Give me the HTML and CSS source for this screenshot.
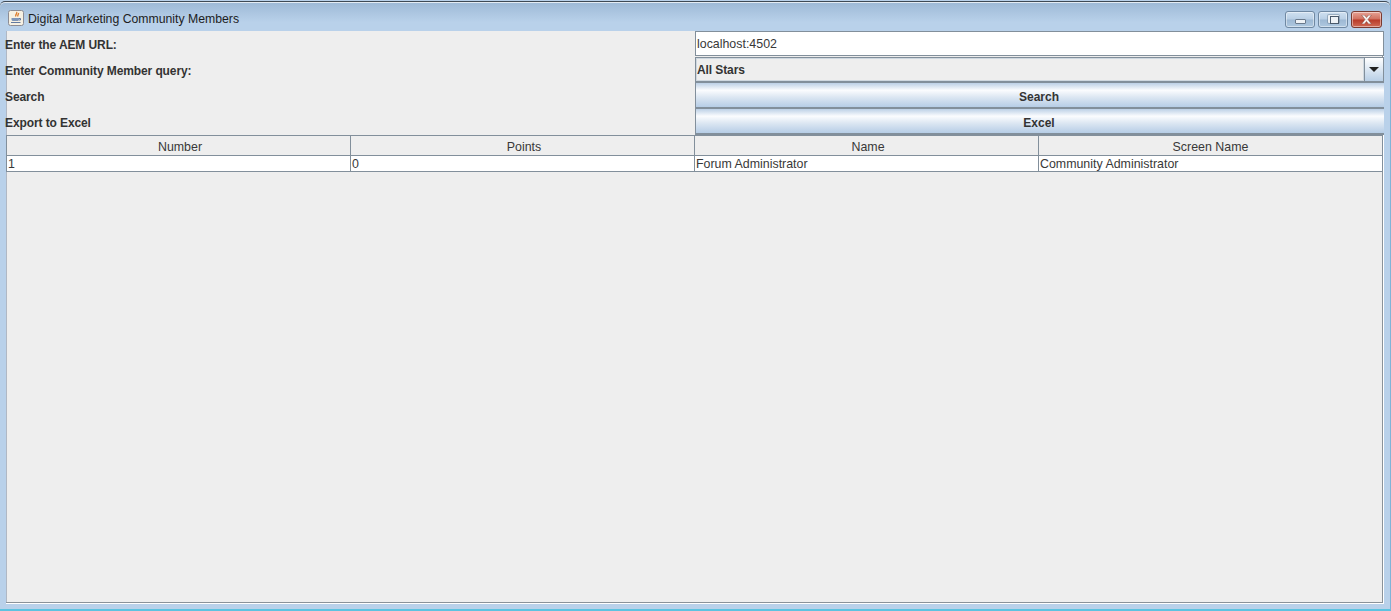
FILE: index.html
```html
<!DOCTYPE html>
<html lang="en">
<head>
<meta charset="utf-8">
<title>Digital Marketing Community Members</title>
<link rel="stylesheet" href="styles.css">
</head>
<body>
<div class="window">
  <header class="titlebar">
    <svg class="app-icon" width="16" height="16" viewBox="0 0 16 16">
      <rect x="0.5" y="0.5" width="15" height="15" rx="2" fill="#f6f0e2" stroke="#8c8c94"/>
      <path d="M8.500 2c1.500 1.500-2 2.500-.5 4.500M10.500 3c.5 1.200-1.500 1.800-.5 3.500" fill="none" stroke="#dc7a2a" stroke-width="1.300"/>
      <path d="M3.500 8h7.500v1.500c0 1-1 1.500-2 1.500H5.500c-1 0-2-.5-2-1.500z" fill="#7f96b8"/>
      <path d="M11 8.500h1.500v1.500H11M3 12.500h9.500" fill="none" stroke="#62799f"/>
    </svg>
    <span class="title">Digital Marketing Community Members</span>
    <div class="controls">
      <span class="ctl"><i class="glyph-min"></i></span>
      <span class="ctl"><i class="glyph-max"></i></span>
      <span class="ctl close"><svg width="13" height="9" viewBox="0 0 13 9"><path d="M1.500 0h3L6.500 2.500 8.500 0h3L8 4.500 11.500 9h-3L6.500 6.500 4.500 9h-3L5 4.500z" fill="#f4f0ee" stroke="#7a3a30" stroke-width=".5"/></svg></span>
    </div>
  </header>
  <main class="pane">
    <section class="form">
      <label class="lbl">Enter the AEM URL:</label>
      <div class="input">localhost:4502</div>
      <label class="lbl">Enter Community Member query:</label>
      <div class="combo"><span class="combo-value">All Stars</span><span class="combo-arrow"><i></i></span></div>
      <label class="lbl">Search</label>
      <button class="btn">Search</button>
      <label class="lbl">Export to Excel</label>
      <button class="btn">Excel</button>
    </section>
    <div class="table">
      <div class="th">Number</div><div class="th">Points</div><div class="th">Name</div><div class="th th-last">Screen Name</div>
      <div class="td">1</div><div class="td">0</div><div class="td">Forum Administrator</div><div class="td">Community Administrator</div>
    </div>
    <div class="filler"></div>
  </main>
</div>
</body>
</html>
```
FILE: styles.css
```css
* { box-sizing: border-box; }
html, body { margin: 0; height: 100%; overflow: hidden; background: #fff; }
body { font-family: "Liberation Sans", Arial, sans-serif; color: #383838; }

.window {
  height: 611px;
  display: flex;
  flex-direction: column;
  padding-top: 1px;
  background: #b9d1ea;
  border-bottom: 2px solid #5cc3e0;
  border-right: 1px solid #7fb4d8;
}
.titlebar {
  height: 30px;
  display: flex;
  align-items: center;
  padding: 4px 8px 0 8px;
  border-top: 1px solid #3f4a55;
  border-radius: 5px 5px 0 0;
  background: linear-gradient(#9db9d6, #b9d1ea 70%);
  box-shadow: inset 0 1px 0 #e4ecf4;
}
.app-icon { flex: none; margin-top: -1px; }
.title {
  margin-left: 4px;
  margin-top: 1px;
  font: 12.25px "Liberation Sans", sans-serif;
  color: #1d1d1d;
}
.controls { margin-left: auto; margin-top: 1px; display: flex; gap: 3px; }
.ctl {
  width: 30px;
  height: 17px;
  display: flex;
  align-items: center;
  justify-content: center;
  border: 1px solid #6f88a2;
  border-radius: 3px;
  background: linear-gradient(#cfe0f0 0, #b9cfe5 48%, #9db8d3 52%, #aec8e0 100%);
  box-shadow: inset 0 0 0 1px rgba(255,255,255,.45);
}
.ctl.close {
  width: 31px;
  border-color: #7a3a30;
  background: linear-gradient(#e7a295 0, #d0705f 48%, #b83a28 52%, #cf6a55 100%);
}
.glyph-min { width: 11px; height: 5px; margin-top: 5px; background: #eef2f6; border: 1px solid #6a7a8c; border-radius: 1px; }
.glyph-max { width: 11px; height: 8px; padding: 1px 2px; background: #eef2f6; border-radius: 1px; box-shadow: 0 0 0 1px rgba(110,130,150,.5); }
.glyph-max::after { content: ""; display: block; width: 7px; height: 6px; background: #eef2f6; border: 1px solid #4a5a6c; }

.pane {
  flex: 1;
  display: flex;
  flex-direction: column;
  margin: 0 6px 5px 6px;
  background: #eeeeee;
  border-bottom: 1px solid #fff;
  border-right: 1px solid #fff;
  box-shadow: inset -1px -1px 0 #8a9299, inset 1px 0 0 #b0b8c4;
}
.form {
  display: grid;
  grid-template-columns: 689px 689px;
  grid-template-rows: 26px 26px 26px 26px;
}
.lbl { font-size: 12px; letter-spacing: -.1px; font-weight: 700; line-height: 26px; padding-top: 1px; margin-left: -1px; color: #333; }
.input {
  margin-bottom: 1px;
  border: 1px solid #828f9b;
  background: #fff;
  font-size: 12.4px;
  line-height: 25px;
  padding-left: 1px;
}
.combo {
  display: flex;
  border: 1px solid #828f9b;
  border-bottom-width: 2px;
  background: #eeeeee;
  font-size: 12px;
  letter-spacing: -.1px;
  font-weight: 700;
  color: #333;
}
.combo-value { flex: 1; line-height: 22px; border: 1px solid #cfd8e0; }
.combo-arrow {
  width: 19px;
  display: flex;
  align-items: center;
  justify-content: center;
  border-left: 1px solid #828f9b;
  background: linear-gradient(#fff, #b9cfe6);
}
.combo-arrow i { width: 0; height: 0; border: 5px solid transparent; border-top: 5px solid #222; border-bottom: 0; }
.btn {
  margin: 0;
  padding: 3px 2px 0 0;
  border: 0;
  border-left: 1px solid #828f9b;
  border-bottom: 2px solid #828f9b;
  background: linear-gradient(#bcd0e6 0, #fbfcfe 30%, #dbe6f2 60%, #b6cde6 100%);
  font: 700 12px "Liberation Sans", sans-serif;
  color: #333;
}
.table {
  display: grid;
  grid-template-columns: 344px 344px 344px 344px;
  grid-template-rows: 20px 15px;
  width: 1377px;
  border-top: 1px solid #828f9b;
  border-left: 1px solid #828f9b;
  border-bottom: 1px solid #828f9b;
  font-size: 12.4px;
}
.th {
  padding: 1px 0 0 3px;
  text-align: center;
  line-height: 20px;
  background: #eeeeee;
  border-right: 1px solid #828f9b;
  border-bottom: 1px solid #828f9b;
}
.th-last { padding-left: 0; }
.td {
  line-height: 16px;
  padding-left: 1px;
  background: #fff;
  border-right: 1px solid #828f9b;
}
.filler { flex: 1; }
```
